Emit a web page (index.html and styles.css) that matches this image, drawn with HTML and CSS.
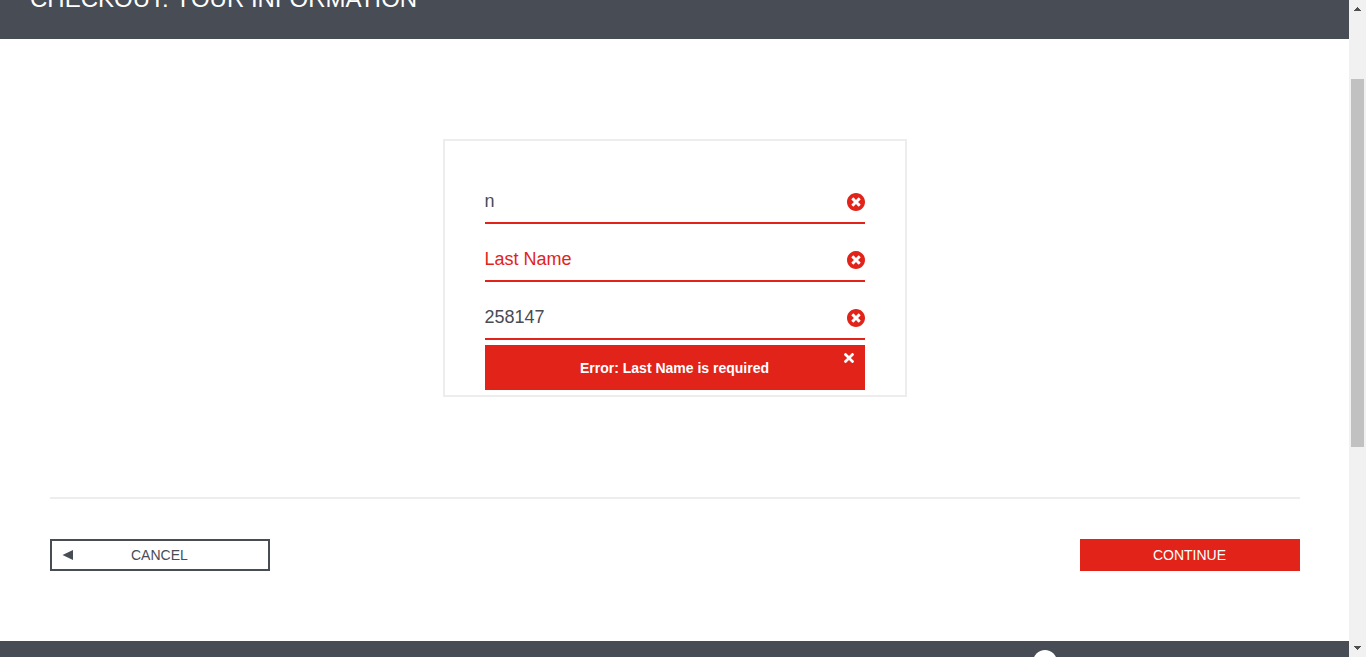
FILE: index.html
```html
<!DOCTYPE html>
<html lang="en">
<head>
<meta charset="utf-8">
<title>Checkout: Your Information</title>
<link rel="stylesheet" href="styles.css">
</head>
<body>
<svg class="defs" width="0" height="0">
  <symbol id="error" viewBox="8 8 496 496"><path d="M256 8C119 8 8 119 8 256s111 248 248 248 248-111 248-248S393 8 256 8zm121.6 313.1c4.7 4.7 4.7 12.3 0 17L338 377.6c-4.7 4.7-12.3 4.7-17 0L256 312l-65.1 65.6c-4.7 4.7-12.3 4.7-17 0L134.4 338c-4.7-4.7-4.7-12.3 0-17l65.6-65-65.6-65.1c-4.7-4.7-4.7-12.3 0-17l39.6-39.6c4.7-4.7 12.3-4.7 17 0l65 65.7 65.1-65.6c4.7-4.7 12.3-4.7 17 0l39.6 39.6c4.7 4.7 4.7 12.3 0 17L312 256l65.6 65.1z"/></symbol>
</svg>
<div class="viewport">
  <div class="page">
    <header class="header"><span class="title">CHECKOUT: YOUR INFORMATION</span></header>
    <main class="main">
      <form class="card">
        <div class="field"><span class="value">n</span><svg class="error-icon"><use href="#error"/></svg></div>
        <div class="field"><span class="value placeholder">Last Name</span><svg class="error-icon"><use href="#error"/></svg></div>
        <div class="field"><span class="value">258147</span><svg class="error-icon"><use href="#error"/></svg></div>
        <div class="error-message">
          <span class="error-text">Error: Last Name is required</span>
          <svg class="close" viewBox="0 0 352 512"><path d="M242.72 256l100.07-100.07c12.28-12.28 12.28-32.19 0-44.48l-22.24-22.24c-12.28-12.28-32.19-12.28-44.48 0L176 189.28 75.93 89.21c-12.28-12.28-32.19-12.28-44.48 0L9.21 111.45c-12.28 12.28-12.28 32.19 0 44.48L109.28 256 9.21 356.07c-12.28 12.28-12.28 32.19 0 44.48l22.24 22.24c12.28 12.28 32.2 12.28 44.48 0L176 322.72l100.07 100.07c12.28 12.28 32.2 12.28 44.48 0l22.24-22.24c12.28-12.28 12.28-32.19 0-44.48L242.72 256z"/></svg>
        </div>
      </form>
      <div class="actions">
        <div class="button cancel">
          <svg class="arrow" viewBox="0 0 10 10"><path d="M0 5L10 0V10z"/></svg>
          <span>CANCEL</span>
        </div>
        <div class="button continue"><span>CONTINUE</span></div>
      </div>
    </main>
    <footer class="footer"><div class="robot"></div></footer>
  </div>
  <div class="scrollbar">
    <svg class="scroll-arrow" viewBox="0 0 7 4" shape-rendering="crispEdges"><path d="M3 0h1v1h1v1h1v1h1v1H0V3h1V2h1V1h1z"/></svg>
    <div class="thumb"></div>
    <svg class="scroll-arrow" viewBox="0 0 7 4" shape-rendering="crispEdges"><path d="M0 0h7v1H6v1H5v1H4v1H3V3H2V2H1V1H0z"/></svg>
  </div>
</div>
</body>
</html>
```
FILE: styles.css
```css
* { box-sizing: border-box; }
body { margin: 0; overflow: hidden; font-family: Arial, "Liberation Sans", sans-serif; color: #474c55; background: #fff; }
.defs { display: block; }
.viewport { display: flex; width: 100%; height: 657px; overflow: hidden; }
.page { flex: 1; display: flex; flex-direction: column; height: 657px; }
.header { flex: none; display: flex; align-items: flex-end; height: 39px; padding: 0 30px 26px; background: #474c55; color: #fff; overflow: hidden; }
.title { font-size: 24px; line-height: 28px; white-space: nowrap; }
.main { flex: 1; padding: 100px 49px 0 50px; }
.card { width: 464px; height: 258px; margin: 0 auto; padding: 39px 40px 0; border: 2px solid #ededed; }
.field { display: flex; align-items: center; justify-content: space-between; height: 44px; margin-bottom: 14px; border-bottom: 2px solid #e2231a; }
.field:nth-child(3) { margin-bottom: 5px; }
.value { font-size: 18px; line-height: 20px; margin-left: -0.5px; padding-bottom: 1px; }
.placeholder { color: #e2231a; }
.error-icon { width: 18px; height: 18px; margin-top: 2px; fill: #e2231a; }
.error-message { position: relative; display: flex; align-items: center; justify-content: center; height: 45px; background: #e2231a; color: #fff; }
.error-text { margin-right: 1px; font-size: 14px; line-height: 16px; font-weight: 700; }
.close { position: absolute; top: 5px; right: 11px; width: 10px; height: 16px; fill: #fff; }
.actions { display: flex; justify-content: space-between; margin-top: 100px; padding-top: 40px; border-top: 2px solid #ededed; }
.button { display: flex; align-items: center; justify-content: center; width: 220px; height: 32px; font-size: 14px; line-height: 16px; }
.cancel { border: 2px solid #474c55; padding: 0 10px; justify-content: flex-start; }
.cancel span { margin-left: 58px; }
.arrow { width: 11px; height: 10px; fill: #474c55; }
.arrow path { transform: scaleX(1.05); }
.continue { padding-right: 1px; background: #e2231a; color: #fff; }
.footer { flex: none; height: 16px; padding: 9px 0 0 1033px; background: #474c55; overflow: hidden; }
.robot { width: 24px; height: 24px; border-radius: 50%; background: #fff; }
.scrollbar { display: flex; flex-direction: column; align-items: center; justify-content: space-between; width: 17px; height: 657px; padding: 7px 0 7px; background: #f1f1f1; }
.scroll-arrow { width: 7px; height: 4px; fill: #505050; }
.thumb { width: 13px; height: 368px; margin: 68px 0 199px; background: #c1c1c1; }
```
